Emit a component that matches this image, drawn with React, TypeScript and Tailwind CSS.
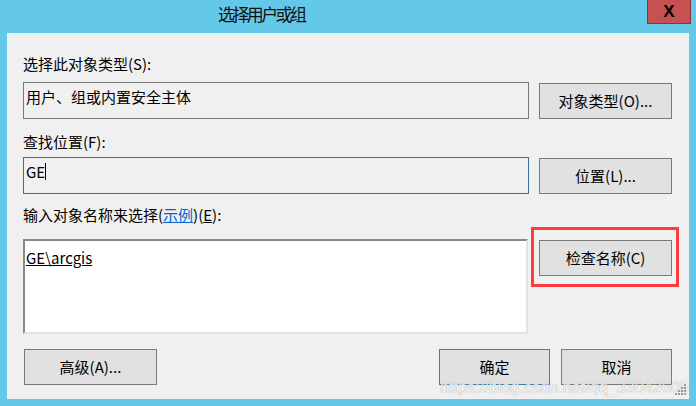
import React from "react"

const cjk = "font-['Noto_Sans_CJK_SC','Noto_Sans',sans-serif]"

function Btn({ children, w, blue }: { children: React.ReactNode; w: string; blue?: boolean }) {
  return (
    <div
      className={`${w} h-[36px] flex items-center justify-center bg-[#e1e1e1] border ${
        blue ? "border-[#3c7fb1]" : "border-[#7a7a7a]"
      } text-[15px] leading-[20px] text-black`}
    >
      {children}
    </div>
  )
}

export default function App() {
  return (
    <div className={`relative w-[696px] h-[406px] overflow-hidden bg-[#64c8e9] flex flex-col ${cjk}`}>
      {/* title bar */}
      <div className="relative h-[33px] shrink-0">
        <div className="pl-[218px] pt-[3px] text-[17px] leading-[22px] tracking-[-2.6px] text-[#111]">选择用户或组</div>
        <div className="absolute right-[5px] top-0 w-[44px] h-[24px] bg-[#c75050] border border-t-0 border-[#8a3535] flex items-center justify-center">
          <span className="font-['Liberation_Sans',sans-serif] font-bold text-[17px] leading-none text-black">X</span>
        </div>
      </div>

      {/* client area */}
      <div className="mx-[7px] h-[366px] bg-[#f0f0f0] pl-[16px] pr-[17px] flex flex-col">
        <div className="mt-[21px] text-[15px] leading-[20px] text-black">选择此对象类型(S):</div>
        <div className="mt-[8px] flex gap-[10px] items-start">
          <div className="w-[506px] h-[37px] border border-[#7a7a7a] bg-[#f0f0f0] pl-[2px] pt-[4px] text-[15px] leading-[20px] text-black">
            用户、组或内置安全主体
          </div>
          <div className="mt-[1px]">
            <Btn w="w-[133px]">对象类型(O)...</Btn>
          </div>
        </div>

        <div className="mt-[13px] text-[15px] leading-[20px] text-black">查找位置(F):</div>
        <div className="mt-[5px] flex gap-[10px] items-start">
          <div className="w-[506px] h-[37px] border border-[#3a6d9e] bg-[#f0f0f0] pl-[2px] pt-[4px] text-[15px] leading-[20px] text-black flex items-start">
            <span>GE</span>
            <span className="inline-block w-[1px] h-[17px] mt-[1px] bg-black" />
          </div>
          <div className="mt-[1px]">
            <Btn w="w-[133px]">位置(L)...</Btn>
          </div>
        </div>

        <div className="mt-[11px] text-[15px] leading-[20px] text-black">
          输入对象名称来选择(<span className="text-[#0066cc] underline">示例</span>)(<span className="underline">E</span>):
        </div>
        <div className="mt-[14px] flex gap-[10px] items-start">
          <div className="w-[505px] h-[95px] border-2 border-t-[#8a8a8a] border-l-[#8a8a8a] border-b-[#e3e3e3] border-r-[#e3e3e3] bg-white pl-[1px] pt-[7px] text-[15px] leading-[20px] text-black">
            <span className="underline">GE\arcgis</span>
          </div>
          <div className="relative mt-[1px] ml-[1px]">
            <Btn w="w-[133px]">检查名称(C)</Btn>
            <div className="absolute -left-[8px] -top-[13px] -right-[7px] -bottom-[11px] border-[3px] border-[#ff3b3b] pointer-events-none" />
          </div>
        </div>

        <div className="mt-[15px] flex items-start">
          <div className="ml-[1px]">
            <Btn w="w-[133px] h-[35px]">高级(A)...</Btn>
          </div>
          <div className="ml-auto flex gap-[11px]">
            <Btn w="w-[111px]" blue>确定</Btn>
            <Btn w="w-[111px]">取消</Btn>
          </div>
        </div>
      </div>

      {/* watermark */}
      <div className="absolute left-[440px] top-[378px] font-['Liberation_Sans',sans-serif] text-[16px] leading-[20px] tracking-[0.1px] text-white/85 [text-shadow:0_0_1px_rgba(0,0,0,0.4)] whitespace-nowrap">
        https://blog.csdn.net/qq_33042605
      </div>
      <div className="absolute left-[675px] top-[384px] grid grid-cols-4 gap-[1px]">
        {Array.from({ length: 16 }).map((_, i) => (
          <span
            key={i}
            className={`w-[2px] h-[2px] ${[3, 6, 7, 9, 10, 11, 12, 13, 14, 15].includes(i) ? "bg-[#9a9a9a]" : "bg-transparent"}`}
          />
        ))}
      </div>
    </div>
  )
}
